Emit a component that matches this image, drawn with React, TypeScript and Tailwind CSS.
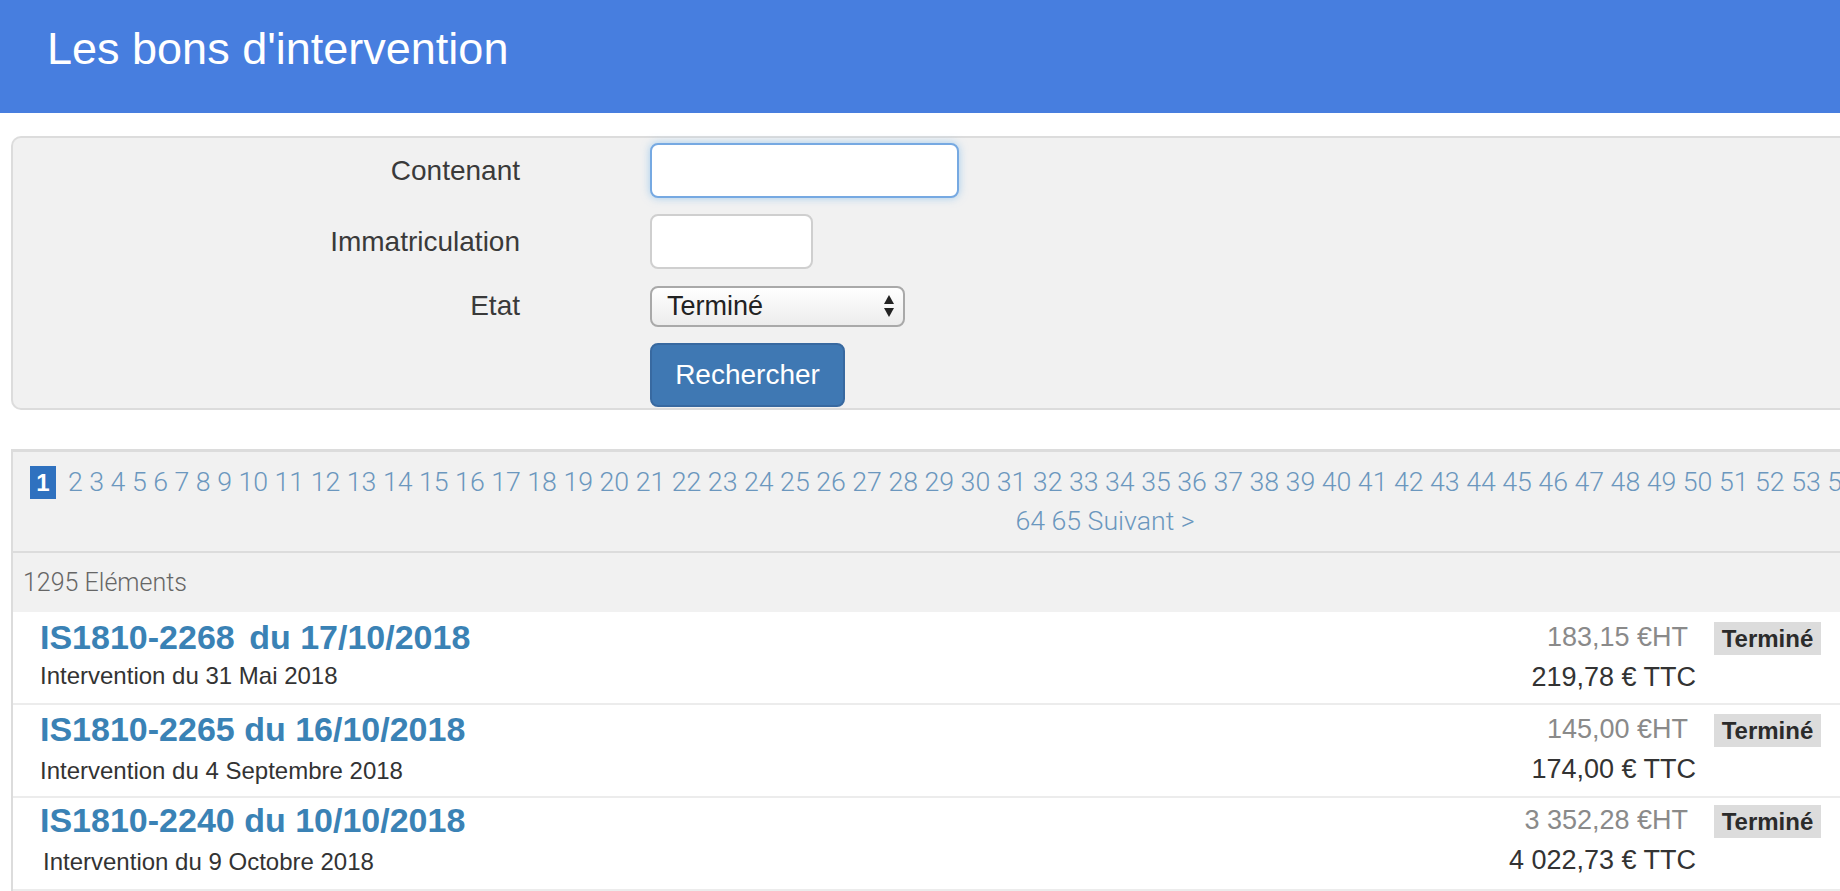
import React from "react";

const sans = "font-['Liberation_Sans','Helvetica_Neue',Arial,sans-serif]";
const light = "font-['Roboto','Liberation_Sans',sans-serif] font-light";

type Row = {
  code: React.ReactNode;
  sub: string;
  ht: string;
  ttc: string;
  pt: string;
  subMt: string;
  subPl: string;
};

const rows: Row[] = [
  {
    code: (
      <>
        IS1810-2268<span className="inline-block w-[5px]" /> du 17/10/2018
      </>
    ),
    sub: "Intervention du 31 Mai 2018",
    ht: "183,15 €HT",
    ttc: "219,78 € TTC",
    pt: "pt-[5px]",
    subMt: "mt-[4px]",
    subPl: "pl-0",
  },
  {
    code: "IS1810-2265 du 16/10/2018",
    sub: "Intervention du 4 Septembre 2018",
    ht: "145,00 €HT",
    ttc: "174,00 € TTC",
    pt: "pt-[4px]",
    subMt: "mt-[7px]",
    subPl: "pl-0",
  },
  {
    code: "IS1810-2240 du 10/10/2018",
    sub: "Intervention du 9 Octobre 2018",
    ht: "3 352,28 €HT",
    ttc: "4 022,73 € TTC",
    pt: "pt-[2px]",
    subMt: "mt-[7px]",
    subPl: "pl-[3px]",
  },
];

function SelectArrows() {
  return (
    <svg width="12" height="24" viewBox="0 0 12 24" className="shrink-0">
      <path d="M6 1 L11 10 L1 10 Z" fill="#222" />
      <path d="M6 23 L11 14 L1 14 Z" fill="#222" />
    </svg>
  );
}

export default function App() {
  const pagesLine1: number[] = [];
  for (let i = 2; i <= 63; i++) pagesLine1.push(i);

  return (
    <div className={`w-[1840px] h-[891px] overflow-hidden bg-white ${sans}`}>
      {/* Header */}
      <header className="h-[113px] bg-[#477edf] pl-[47px] pt-[26px]">
        <h1 className="text-[45px] leading-[45px] text-white font-normal">Les bons d'intervention</h1>
      </header>

      {/* Search form */}
      <div className="mt-[23px] ml-[11px] h-[274px] border-2 border-r-0 border-[#dcdcdc] rounded-l-[10px] bg-[#f1f1f1] pt-[5px]">
        <div className="flex flex-col gap-[16px]">
          <div className="flex items-center">
            <label className="w-[507px] text-right text-[28px] text-[#3a3a3a]">Contenant</label>
            <div className="ml-[130px] w-[309px] h-[55px] bg-white border-2 border-[#76a9e2] rounded-[8px] shadow-[0_0_8px_rgba(102,175,233,0.55)]" />
          </div>
          <div className="flex items-center">
            <label className="w-[507px] text-right text-[28px] text-[#3a3a3a]">Immatriculation</label>
            <div className="ml-[130px] w-[163px] h-[55px] bg-white border-2 border-[#cfcfcf] rounded-[8px]" />
          </div>
          <div className="flex items-center">
            <label className="w-[507px] text-right text-[28px] text-[#3a3a3a]">Etat</label>
            <div className="ml-[130px] w-[255px] h-[41px] flex items-center justify-between pl-[15px] pr-[8px] border-2 border-[#a9a9a9] rounded-[8px] bg-gradient-to-b from-white to-[#ececec]">
              <span className="text-[27px] leading-none text-[#222]">Terminé</span>
              <SelectArrows />
            </div>
          </div>
          <div className="flex items-center">
            <div className="w-[507px]" />
            <button className="ml-[130px] w-[195px] h-[64px] bg-[#3f78b3] border-2 border-[#3869a0] rounded-[8px] text-white text-[28px]">
              Rechercher
            </button>
          </div>
        </div>
      </div>

      {/* Results panel */}
      <div className="mt-[39px] ml-[11px] border-l-2 border-[#dcdcdc]">
        {/* Pagination */}
        <div className="border-t-[3px] border-[#dcdcdc] bg-[#f1f1f1] pt-[11px] pb-[10px]">
          <div className="w-[2184px]">
            <div className={`h-[39px] flex items-center pl-[17px] whitespace-nowrap text-[26.7px] text-[#6b97be] ${light}`}>
              <span className={`shrink-0 inline-flex items-center justify-center w-[26px] h-[33px] bg-[#2f71bf] text-white font-bold text-[24px] mr-[12px] ${sans}`}>
                1
              </span>
              <span className="shrink-0">{pagesLine1.join(" ")}</span>
            </div>
            <div className={`h-[39px] flex items-center justify-center whitespace-nowrap text-[26.7px] text-[#6b97be] ${light}`}>
              64 65 Suivant &gt;
            </div>
          </div>
        </div>

        {/* Count */}
        <div className="border-t-2 border-[#dcdcdc] bg-[#f1f1f1] h-[61px] flex items-center pl-[10px]">
          <span className={`text-[25px] text-[#666] ${light}`}>1295 Eléments</span>
        </div>

        {/* Rows */}
        <div className="bg-white">
          {rows.map((r, i) => (
            <div
              key={i}
              className={`h-[93px] border-b-2 border-[#ececec] flex items-start justify-between pl-[27px] pr-[19px] ${r.pt}`}
            >
              <div>
                <div className="text-[34px] leading-[40px] font-bold text-[#3a82b5]">{r.code}</div>
                <div className={`text-[24px] leading-[30px] text-[#333] ${r.subMt} ${r.subPl}`}>{r.sub}</div>
              </div>
              <div className="flex items-start">
                <div className="text-right mt-[3px]">
                  <div className="text-[27px] leading-[34px] text-[#8a8a8a] pr-[8px]">{r.ht}</div>
                  <div className="text-[27px] leading-[34px] text-[#333] mt-[6px]">{r.ttc}</div>
                </div>
                <div className="shrink-0 ml-[18px] mt-[5px] w-[107px] h-[33px] bg-[#dcdcdc] flex items-center justify-center text-[24px] font-bold text-[#2b2b2b]">
                  Terminé
                </div>
              </div>
            </div>
          ))}
        </div>
      </div>
    </div>
  );
}
